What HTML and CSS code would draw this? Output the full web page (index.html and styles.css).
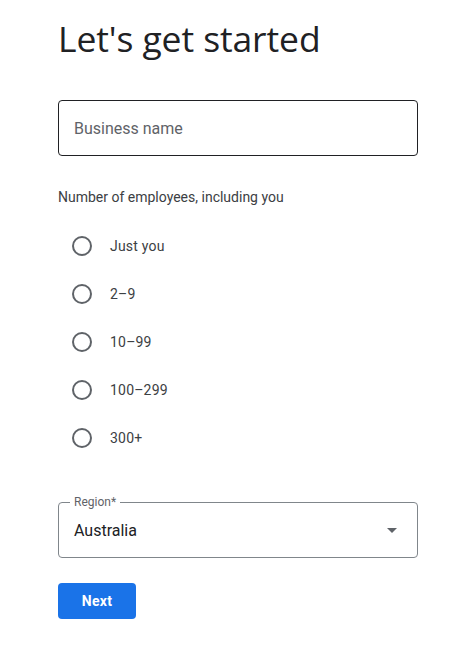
FILE: index.html
```html
<!DOCTYPE html>
<html>
<head>
<meta charset="utf-8">
<link rel="stylesheet" href="styles.css">
</head>
<body>
<main class="page">
  <h1 class="title">Let's get started</h1>
  <div class="field">
    <span class="placeholder">Business name</span>
  </div>
  <p class="question">Number of employees, including you</p>
  <ul class="radios">
    <li class="radio"><span class="circle"></span><span class="label">Just you</span></li>
    <li class="radio"><span class="circle"></span><span class="label">2–9</span></li>
    <li class="radio"><span class="circle"></span><span class="label">10–99</span></li>
    <li class="radio"><span class="circle"></span><span class="label">100–299</span></li>
    <li class="radio"><span class="circle"></span><span class="label">300+</span></li>
  </ul>
  <div class="select">
    <span class="select-label">Region*</span>
    <span class="select-value">Australia</span>
    <svg class="arrow" width="10" height="5" viewBox="0 0 10 5"><path d="M0 0 L10 0 L5 5 Z" fill="#5f6368"/></svg>
  </div>
  <button class="next">Next</button>
</main>
</body>
</html>
```
FILE: styles.css
```css
* { box-sizing: border-box; }
html, body { margin: 0; padding: 0; background: #fff; }
body { font-family: Roboto, "Noto Sans", Arial, sans-serif; color: #3c4043; }
.page { padding: 14px 45px 0 58px; width: 463px; }
.title {
  margin: 0;
  font-family: "Open Sans", Roboto, sans-serif;
  font-weight: 400;
  font-size: 35.5px;
  line-height: 48px;
  color: #202124;
  letter-spacing: -0.1px;
}
.field {
  margin-top: 38px;
  height: 56px;
  width: 360px;
  border: 1px solid #202124;
  border-radius: 4px;
  display: flex;
  align-items: center;
  padding-left: 15px;
}
.placeholder { font-size: 16px; color: #5f6368; }
.question {
  margin: 31px 0 0;
  font-size: 14px;
  line-height: 20px;
  color: #3c4043;
}
.radios { list-style: none; margin: 15px 0 0; padding: 0; }
.radio {
  display: flex;
  align-items: center;
  height: 48px;
}
.circle {
  width: 20px; height: 20px;
  border: 2px solid #5f6368;
  border-radius: 50%;
  margin-left: 14px;
}
.label { margin-left: 18px; font-size: 14px; color: #3c4043; letter-spacing: 0.2px; }
.select {
  position: relative;
  margin-top: 40px;
  width: 360px;
  height: 56px;
  border: 1px solid #80868b;
  border-radius: 4px;
  display: flex;
  align-items: center;
  padding-left: 15px;
}
.select-label {
  position: absolute;
  top: -8px;
  left: 11px;
  padding: 0 4px;
  background: #fff;
  font-size: 12px;
  line-height: 14px;
  color: #5f6368;
}
.select-value { font-size: 16px; color: #202124; flex: 1; }
.arrow { margin-right: 20px; }
.next {
  margin-top: 25px;
  width: 78px;
  height: 36px;
  border: none;
  border-radius: 4px;
  background: #1a73e8;
  color: #fff;
  font-family: Roboto, sans-serif;
  font-weight: 700;
  font-size: 14px;
  letter-spacing: 0.25px;
}
```
